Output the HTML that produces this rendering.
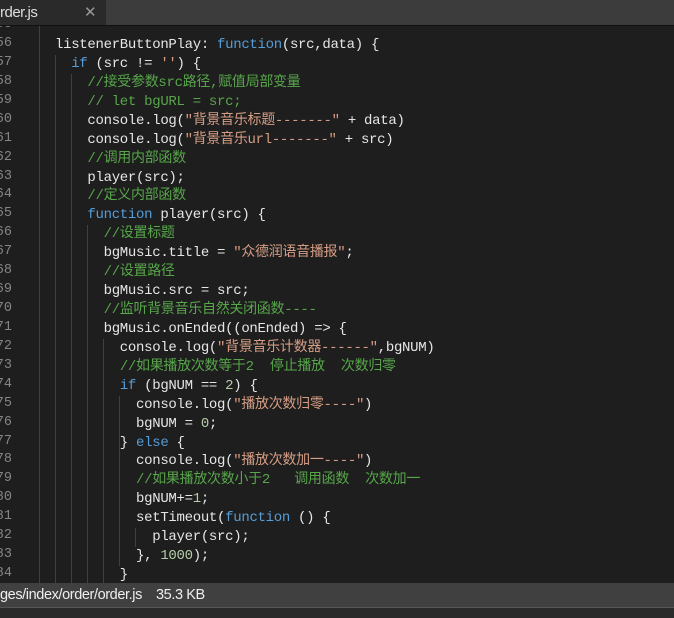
<!DOCTYPE html>
<html><head><meta charset="utf-8"><style>
body{margin:0;width:674px;height:617px;background:#1e1e1e;overflow:hidden;position:relative;font-family:"Liberation Mono","Noto Sans CJK SC",monospace;}
#tabbar{position:absolute;left:0;top:0;width:674px;height:25px;background:#3c3c3c;border-bottom:1px solid #111;}
#tab{position:absolute;left:0;top:0;width:106px;height:25px;background:#2a2a2a;color:#ddd;font:15px "Liberation Sans",sans-serif;line-height:25px;letter-spacing:-0.5px}
#tab span{position:absolute;left:84px;top:0;color:#999;font-size:15px;font-weight:300}
.ln{position:absolute;left:-10px;width:22px;text-align:right;color:#858585;font-size:13.5px;}
.l{position:absolute;left:55px;white-space:pre;color:#e6e6e6;font-size:14px;letter-spacing:-0.3px;line-height:19px;}
.k{color:#569cd6}.s{color:#d69d85}.c{color:#57a64a}.n{color:#b5cea8}
.g{position:absolute;width:1px;background:#404040}
#status{position:absolute;left:0;top:583px;width:674px;height:24px;background:#404040;color:#eee;font:14.5px "Liberation Sans",sans-serif;line-height:24px;letter-spacing:-0.4px}
#bot{position:absolute;left:0;top:607px;width:674px;height:10px;background:#2a2a2a;border-top:1px solid #555}
</style></head><body>
<div class="g" style="left:39px;top:26px;height:557px"></div>
<div class="g" style="left:55px;top:55px;height:528px"></div>
<div class="g" style="left:71px;top:74px;height:509px"></div>
<div class="g" style="left:87px;top:225px;height:358px"></div>
<div class="g" style="left:103px;top:339px;height:244px"></div>
<div class="g" style="left:119px;top:396px;height:170px"></div>
<div class="g" style="left:135px;top:528px;height:19px"></div>
<div style="position:absolute;left:0;top:0">
<div class="ln" style="top:17px">55</div><div class="ln" style="top:36px">56</div><div class="ln" style="top:55px">57</div><div class="ln" style="top:74px">58</div><div class="ln" style="top:93px">59</div><div class="ln" style="top:112px">60</div><div class="ln" style="top:131px">61</div><div class="ln" style="top:150px">62</div><div class="ln" style="top:169px">63</div><div class="ln" style="top:187px">64</div><div class="ln" style="top:206px">65</div><div class="ln" style="top:225px">66</div><div class="ln" style="top:244px">67</div><div class="ln" style="top:263px">68</div><div class="ln" style="top:282px">69</div><div class="ln" style="top:301px">70</div><div class="ln" style="top:320px">71</div><div class="ln" style="top:339px">72</div><div class="ln" style="top:358px">73</div><div class="ln" style="top:377px">74</div><div class="ln" style="top:396px">75</div><div class="ln" style="top:415px">76</div><div class="ln" style="top:434px">77</div><div class="ln" style="top:452px">78</div><div class="ln" style="top:471px">79</div><div class="ln" style="top:490px">80</div><div class="ln" style="top:509px">81</div><div class="ln" style="top:528px">82</div><div class="ln" style="top:547px">83</div><div class="ln" style="top:566px">84</div>
</div>
<div class="l" style="top:36px">listenerButtonPlay: <span class="k">function</span>(src,data) {</div>
<div class="l" style="top:55px">  <span class="k">if</span> (src != <span class="s">''</span>) {</div>
<div class="l" style="top:74px">    <span class="c">//接受参数src路径,赋值局部变量</span></div>
<div class="l" style="top:93px">    <span class="c">// let bgURL = src;</span></div>
<div class="l" style="top:112px">    console.log(<span class="s">"背景音乐标题-------"</span> + data)</div>
<div class="l" style="top:131px">    console.log(<span class="s">"背景音乐url-------"</span> + src)</div>
<div class="l" style="top:150px">    <span class="c">//调用内部函数</span></div>
<div class="l" style="top:169px">    player(src);</div>
<div class="l" style="top:187px">    <span class="c">//定义内部函数</span></div>
<div class="l" style="top:206px">    <span class="k">function</span> player(src) {</div>
<div class="l" style="top:225px">      <span class="c">//设置标题</span></div>
<div class="l" style="top:244px">      bgMusic.title = <span class="s">"众德润语音播报"</span>;</div>
<div class="l" style="top:263px">      <span class="c">//设置路径</span></div>
<div class="l" style="top:282px">      bgMusic.src = src;</div>
<div class="l" style="top:301px">      <span class="c">//监听背景音乐自然关闭函数----</span></div>
<div class="l" style="top:320px">      bgMusic.onEnded((onEnded) => {</div>
<div class="l" style="top:339px">        console.log(<span class="s">"背景音乐计数器------"</span>,bgNUM)</div>
<div class="l" style="top:358px">        <span class="c">//如果播放次数等于2  停止播放  次数归零</span></div>
<div class="l" style="top:377px">        <span class="k">if</span> (bgNUM == <span class="n">2</span>) {</div>
<div class="l" style="top:396px">          console.log(<span class="s">"播放次数归零----"</span>)</div>
<div class="l" style="top:415px">          bgNUM = <span class="n">0</span>;</div>
<div class="l" style="top:434px">        } <span class="k">else</span> {</div>
<div class="l" style="top:452px">          console.log(<span class="s">"播放次数加一----"</span>)</div>
<div class="l" style="top:471px">          <span class="c">//如果播放次数小于2   调用函数  次数加一</span></div>
<div class="l" style="top:490px">          bgNUM+=<span class="n">1</span>;</div>
<div class="l" style="top:509px">          setTimeout(<span class="k">function</span> () {</div>
<div class="l" style="top:528px">            player(src);</div>
<div class="l" style="top:547px">          }, <span class="n">1000</span>);</div>
<div class="l" style="top:566px">        }</div>
<div id="tabbar"><div id="tab">rder.js<span>✕</span></div></div>
<div id="status"><span style="position:absolute;left:0">ges/index/order/order.js</span><span style="position:absolute;left:156px">35.3 KB</span></div>
<div id="bot"></div>
</body></html>
